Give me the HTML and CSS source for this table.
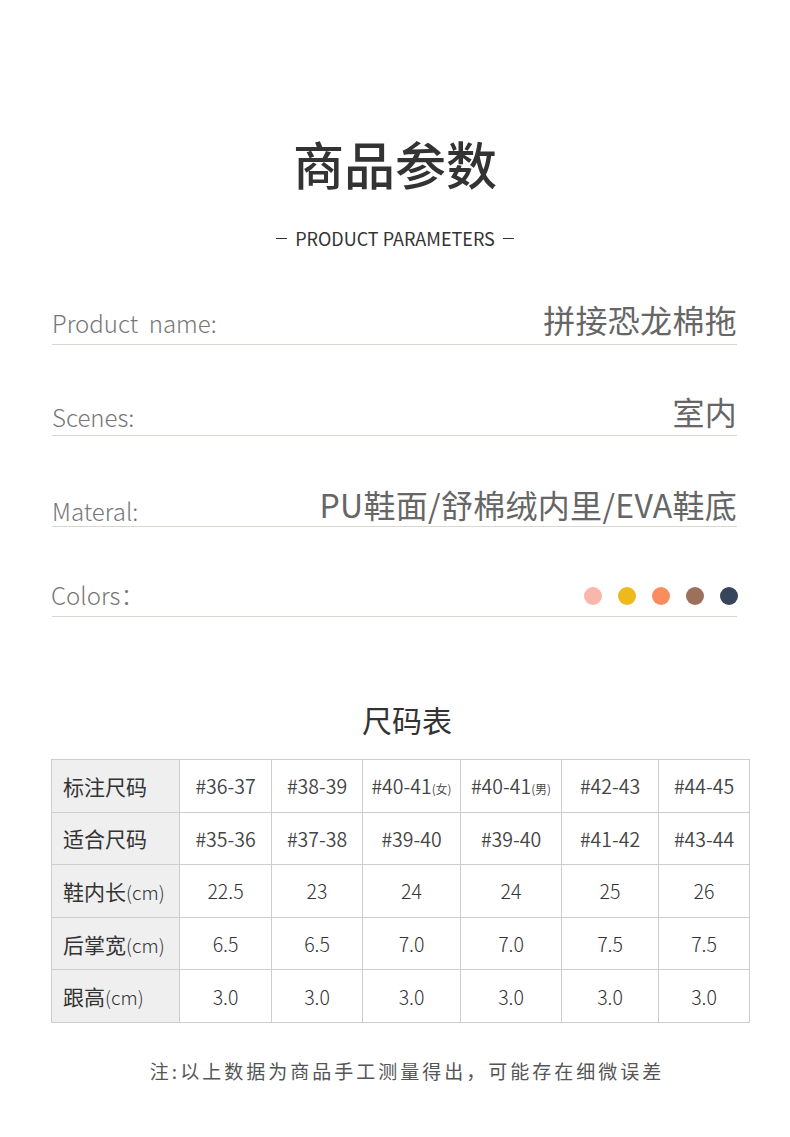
FILE: index.html
```html
<!DOCTYPE html>
<html lang="zh-CN">
<head>
<meta charset="utf-8">
<title>商品参数</title>
<link rel="stylesheet" href="styles.css">
</head>
<body>
<div class="page">
  <header class="head">
    <h1 class="title">商品参数</h1>
    <div class="subtitle"><span class="dash"></span>PRODUCT PARAMETERS<span class="dash"></span></div>
  </header>

  <section class="params">
    <div class="row">
      <span class="label">Product&nbsp; name:</span>
      <span class="value">拼接恐龙棉拖</span>
    </div>
    <div class="row row-scenes">
      <span class="label">Scenes:</span>
      <span class="value">室内</span>
    </div>
    <div class="row row-material">
      <span class="label">Materal:</span>
      <span class="value">PU鞋面/舒棉绒内里/EVA鞋底</span>
    </div>
    <div class="row row-colors">
      <span class="label label-colors">Colors：</span>
      <span class="dots">
        <span class="dot dot-pink"></span>
        <span class="dot dot-yellow"></span>
        <span class="dot dot-orange"></span>
        <span class="dot dot-brown"></span>
        <span class="dot dot-navy"></span>
      </span>
    </div>
  </section>

  <section class="sizes">
    <h2 class="size-title">尺码表</h2>
    <table class="size-table">
      <colgroup>
        <col class="c0"><col class="c1"><col class="c2"><col class="c3"><col class="c4"><col class="c5"><col class="c6">
      </colgroup>
      <tr>
        <th>标注尺码</th>
        <td>#36-37</td><td>#38-39</td><td>#40-41<small>(女)</small></td><td>#40-41<small>(男)</small></td><td>#42-43</td><td>#44-45</td>
      </tr>
      <tr>
        <th>适合尺码</th>
        <td>#35-36</td><td>#37-38</td><td>#39-40</td><td>#39-40</td><td>#41-42</td><td>#43-44</td>
      </tr>
      <tr class="narrow">
        <th>鞋内长<span class="unit">(cm)</span></th>
        <td>22.5</td><td>23</td><td>24</td><td>24</td><td>25</td><td>26</td>
      </tr>
      <tr class="narrow">
        <th>后掌宽<span class="unit">(cm)</span></th>
        <td>6.5</td><td>6.5</td><td>7.0</td><td>7.0</td><td>7.5</td><td>7.5</td>
      </tr>
      <tr class="narrow">
        <th>跟高<span class="unit">(cm)</span></th>
        <td>3.0</td><td>3.0</td><td>3.0</td><td>3.0</td><td>3.0</td><td>3.0</td>
      </tr>
    </table>
    <p class="note">注:以上数据为商品手工测量得出，可能存在细微误差</p>
  </section>
</div>
</body>
</html>
```

FILE: styles.css
```css
* { box-sizing: border-box; }
html, body { margin: 0; padding: 0; background: #fff; }
body {
  font-family: "Noto Sans CJK SC", "Noto Sans", sans-serif;
  color: #333;
}
.page { width: 790px; }

.head { padding-top: 138px; text-align: center; }
.title {
  margin: 0;
  font-size: 51px;
  line-height: 51px;
  font-weight: 500;
  color: #333;
}
.subtitle {
  margin-top: 39px;
  font-size: 18px;
  line-height: 20px;
  color: #333;
  font-weight: 400;
  display: flex;
  justify-content: center;
  align-items: center;
  gap: 8px;
}
.dash { display: inline-block; width: 11px; height: 1px; background: #333; }

.params { margin: 0 53px 0 52px; padding-top: 6px; }
.row {
  height: 91px;
  display: flex;
  justify-content: space-between;
  align-items: flex-end;
  border-bottom: 1px solid #d9d7d0;
}
.label {
  font-size: 24px;
  line-height: 24px;
  font-weight: 300;
  color: #777;
  margin-bottom: 9px;
}
.value {
  font-size: 32px;
  line-height: 32px;
  font-weight: 400;
  letter-spacing: 0.3px;
  color: #666;
  margin-bottom: 9px;
}
.row-scenes .label { margin-bottom: 6px; }
.row-scenes .value { margin-bottom: 8px; }
.row-material .label { margin-bottom: 3px; }
.row-material .value { margin-bottom: 6px; }
.row-colors { height: 90px; }
.label-colors { margin-left: -1px; }
.dots { display: flex; gap: 16px; margin-bottom: 11px; margin-right: -1px; }
.dot { width: 18px; height: 18px; border-radius: 50%; display: block; }
.dot-pink { background: #f9b6aa; }
.dot-yellow { background: #ecba1c; }
.dot-orange { background: #fb8c5d; }
.dot-brown { background: #9d705c; }
.dot-navy { background: #364559; }

.sizes { text-align: center; }
.size-title {
  margin: 86px 0 0;
  padding-left: 24px;
  font-size: 30px;
  line-height: 32px;
  font-weight: 400;
  color: #333;
}
.size-table {
  margin: 24px 0 0 51px;
  width: 698px;
  border-collapse: collapse;
  table-layout: fixed;
  border: 1px solid #cdcdcd;
}
.c0 { width: 128px; }
.c1 { width: 92px; }
.c2 { width: 91px; }
.c3 { width: 98px; }
.c4 { width: 101px; }
.c5 { width: 97px; }
.c6 { width: 91px; }
.size-table tr { height: 52.6px; }
.size-table th, .size-table td {
  border: 1px solid #cdcdcd;
  padding: 0;
}
.size-table th {
  background: #efefef;
  text-align: left;
  padding-left: 11px;
  font-size: 21px;
  font-weight: 400;
  color: #333;
}
.size-table td {
  text-align: center;
  font-size: 19.5px;
  font-weight: 350;
  color: #444;
}
.size-table td small { font-size: 12px; }
.size-table .unit { font-size: 19px; font-weight: 300; }
.size-table .narrow td { font-weight: 300; color: #333; }

.note {
  margin: 36px 0 0;
  padding-left: 24px;
  font-size: 19px;
  line-height: 24px;
  letter-spacing: 3px;
  color: #555;
  font-weight: 400;
}
```
